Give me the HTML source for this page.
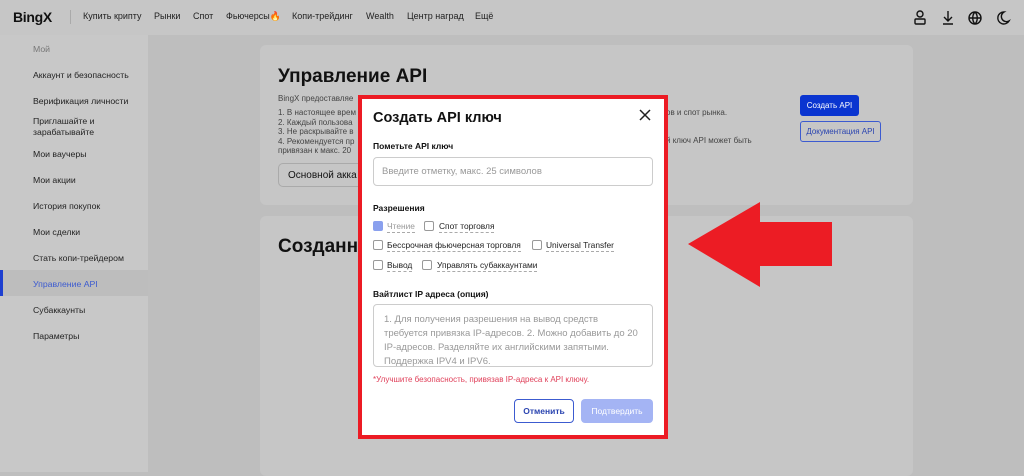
<!DOCTYPE html><html><head><meta charset="utf-8"><style>
*{box-sizing:border-box;margin:0;padding:0}
body{width:1024px;height:472px;overflow:hidden;background:#bebebe;font-family:"Liberation Sans","Noto Sans CJK SC",sans-serif;position:relative;color:#111}
.abs{position:absolute}
.hdr{left:0;top:0;width:1024px;height:35px;background:#c6c6c6}
.nav{top:11px;font-size:9px;color:#222}
.side{left:0;top:35px;width:148px;height:437px;background:#c8c8c8}
.si{position:absolute;left:33px;font-size:8.7px;color:#222}
.card{background:#c6c6c6;border-radius:6px}
.modal{left:358px;top:95px;width:310px;height:344px;border:4px solid #ec1b24;background:#fff}
.cb{position:absolute;width:10px;height:10px;border:1px solid #999;border-radius:2px;background:#fff}
.lbl{position:absolute;font-size:8.4px;color:#222;border-bottom:1px dashed #aaa;padding-bottom:1px}
</style></head><body>
<div class="abs hdr"></div>
<div class="abs" style="left:13px;top:9px;font-size:14px;font-weight:bold;letter-spacing:-0.3px">BingX</div>
<div class="abs" style="left:70px;top:10px;width:1px;height:14px;background:#aaa"></div>
<div class="abs nav" style="left:83px">Купить крипту</div>
<div class="abs nav" style="left:154px">Рынки</div>
<div class="abs nav" style="left:193px">Спот</div>
<div class="abs nav" style="left:226px">Фьючерсы<span style="color:#e0621a">🔥</span></div>
<div class="abs nav" style="left:292px">Копи-трейдинг</div>
<div class="abs nav" style="left:366px">Wealth</div>
<div class="abs nav" style="left:407px">Центр наград</div>
<div class="abs nav" style="left:475px">Ещё</div>
<svg class="abs" style="left:912px;top:9px" width="100" height="18" viewBox="0 0 100 18" fill="none" stroke="#111" stroke-width="1.4">
<circle cx="8" cy="5" r="3"/><rect x="3" y="10" width="10" height="5" rx="1"/>
<path d="M36 2v10M32 8l4 4 4-4M31 15h10"/>
<circle cx="63" cy="9" r="6"/><path d="M57 9h12M63 3c-3 3-3 9 0 12M63 3c3 3 3 9 0 12"/>
<path d="M92 3a6 6 0 1 0 5 9a5 5 0 0 1-5-9z"/>
</svg>
<div class="abs side"></div>
<div class="si" style="top:44px;color:#777">Мой</div>
<div class="si" style="top:70px">Аккаунт и безопасность</div>
<div class="si" style="top:96px">Верификация личности</div>
<div class="si" style="top:116px;line-height:11px">Приглашайте и<br>зарабатывайте</div>
<div class="si" style="top:149px">Мои ваучеры</div>
<div class="si" style="top:175px">Мои акции</div>
<div class="si" style="top:201px">История покупок</div>
<div class="si" style="top:227px">Мои сделки</div>
<div class="si" style="top:253px">Стать копи-трейдером</div>
<div class="abs" style="left:0;top:270px;width:148px;height:26px;background:#bdbdbd;border-left:3px solid #1d3fd0"></div>
<div class="si" style="top:279px;color:#3c5bd0">Управление API</div>
<div class="si" style="top:305px">Субаккаунты</div>
<div class="si" style="top:331px">Параметры</div>
<div class="abs card" style="left:260px;top:45px;width:653px;height:160px"></div>
<div class="abs" style="left:278px;top:66px;font-size:19px;font-weight:bold">Управление API</div>
<div class="abs" style="left:278px;top:94px;font-size:8px;color:#444">BingX предоставляе</div>
<div class="abs" style="left:278px;top:108px;font-size:8px;color:#444;line-height:9.5px">1. В настоящее врем<br>2. Каждый пользова<br>3. Не раскрывайте в<br>4. Рекомендуется пр<br>привязан к макс. 20</div>
<div class="abs" style="left:666px;top:108px;font-size:8px;color:#444">ов и спот рынка.</div>
<div class="abs" style="left:666px;top:136px;font-size:8px;color:#444">й ключ API может быть</div>
<div class="abs" style="left:278px;top:163px;width:90px;height:24px;border:1px solid #aaa;border-radius:5px;font-size:10px;padding:6px 9px">Основной акка</div>
<div class="abs" style="left:800px;top:95px;width:59px;height:21px;background:#0a35d0;border-radius:3px;color:#fff;font-size:8px;text-align:center;line-height:21px">Создать API</div>
<div class="abs" style="left:800px;top:121px;width:81px;height:21px;border:1px solid #3c5bd0;border-radius:3px;color:#2a44b0;font-size:8px;text-align:center;line-height:19px">Документация API</div>
<div class="abs card" style="left:260px;top:216px;width:653px;height:260px"></div>
<div class="abs" style="left:278px;top:236px;font-size:19px;font-weight:bold">Созданн</div>
<div class="abs modal"></div>
<div class="abs" style="left:373px;top:110px;font-size:14.5px;font-weight:bold">Создать API ключ</div>
<svg class="abs" style="left:638px;top:108px" width="14" height="14" stroke="#222" stroke-width="1.5"><path d="M2 2l10 10M12 2L2 12"/></svg>
<div class="abs" style="left:373px;top:141px;font-size:8.5px;font-weight:bold">Пометьте API ключ</div>
<div class="abs" style="left:373px;top:157px;width:280px;height:29px;border:1px solid #ccc;border-radius:4px;font-size:9.5px;color:#999;padding:8px 8px">Введите отметку, макс. 25 символов</div>
<div class="abs" style="left:373px;top:203px;font-size:8.5px;font-weight:bold">Разрешения</div>
<div class="cb" style="left:373px;top:221px;background:#8aa0ee;border-color:#8aa0ee"></div>
<div class="lbl" style="left:387px;top:221px;color:#999">Чтение</div>
<div class="cb" style="left:424px;top:221px"></div>
<div class="lbl" style="left:439px;top:221px">Спот торговля</div>
<div class="cb" style="left:373px;top:240px"></div>
<div class="lbl" style="left:387px;top:240px">Бессрочная фьючерсная торговля</div>
<div class="cb" style="left:532px;top:240px"></div>
<div class="lbl" style="left:546px;top:240px">Universal Transfer</div>
<div class="cb" style="left:373px;top:260px"></div>
<div class="lbl" style="left:387px;top:260px">Вывод</div>
<div class="cb" style="left:422px;top:260px"></div>
<div class="lbl" style="left:437px;top:260px">Управлять субаккаунтами</div>
<div class="abs" style="left:373px;top:289px;font-size:8.5px;font-weight:bold">Вайтлист IP адреса (опция)</div>
<div class="abs" style="left:373px;top:304px;width:280px;height:63px;border:1px solid #ccc;border-radius:4px;font-size:9.5px;color:#999;padding:8px 10px;line-height:14px;overflow:hidden">1. Для получения разрешения на вывод средств требуется привязка IP-адресов. 2. Можно добавить до 20 IP-адресов. Разделяйте их английскими запятыми. Поддержка IPV4 и IPV6.</div>
<div class="abs" style="left:373px;top:375px;font-size:8px;color:#e0405a">*Улучшите безопасность, привязав IP-адреса к API ключу.</div>
<div class="abs" style="left:514px;top:399px;width:60px;height:24px;border:1px solid #3c5bd0;border-radius:4px;color:#2a44b0;font-size:8.5px;font-weight:bold;text-align:center;line-height:22px">Отменить</div>
<div class="abs" style="left:581px;top:399px;width:72px;height:24px;background:#a4b4f4;border-radius:4px;color:#fff;font-size:8.5px;text-align:center;line-height:24px">Подтвердить</div>
<svg class="abs" style="left:0;top:0" width="1024" height="472"><polygon points="688,244 760,202 760,222 832,222 832,266 760,266 760,287" fill="#ec1c24"/></svg>
</body></html>
